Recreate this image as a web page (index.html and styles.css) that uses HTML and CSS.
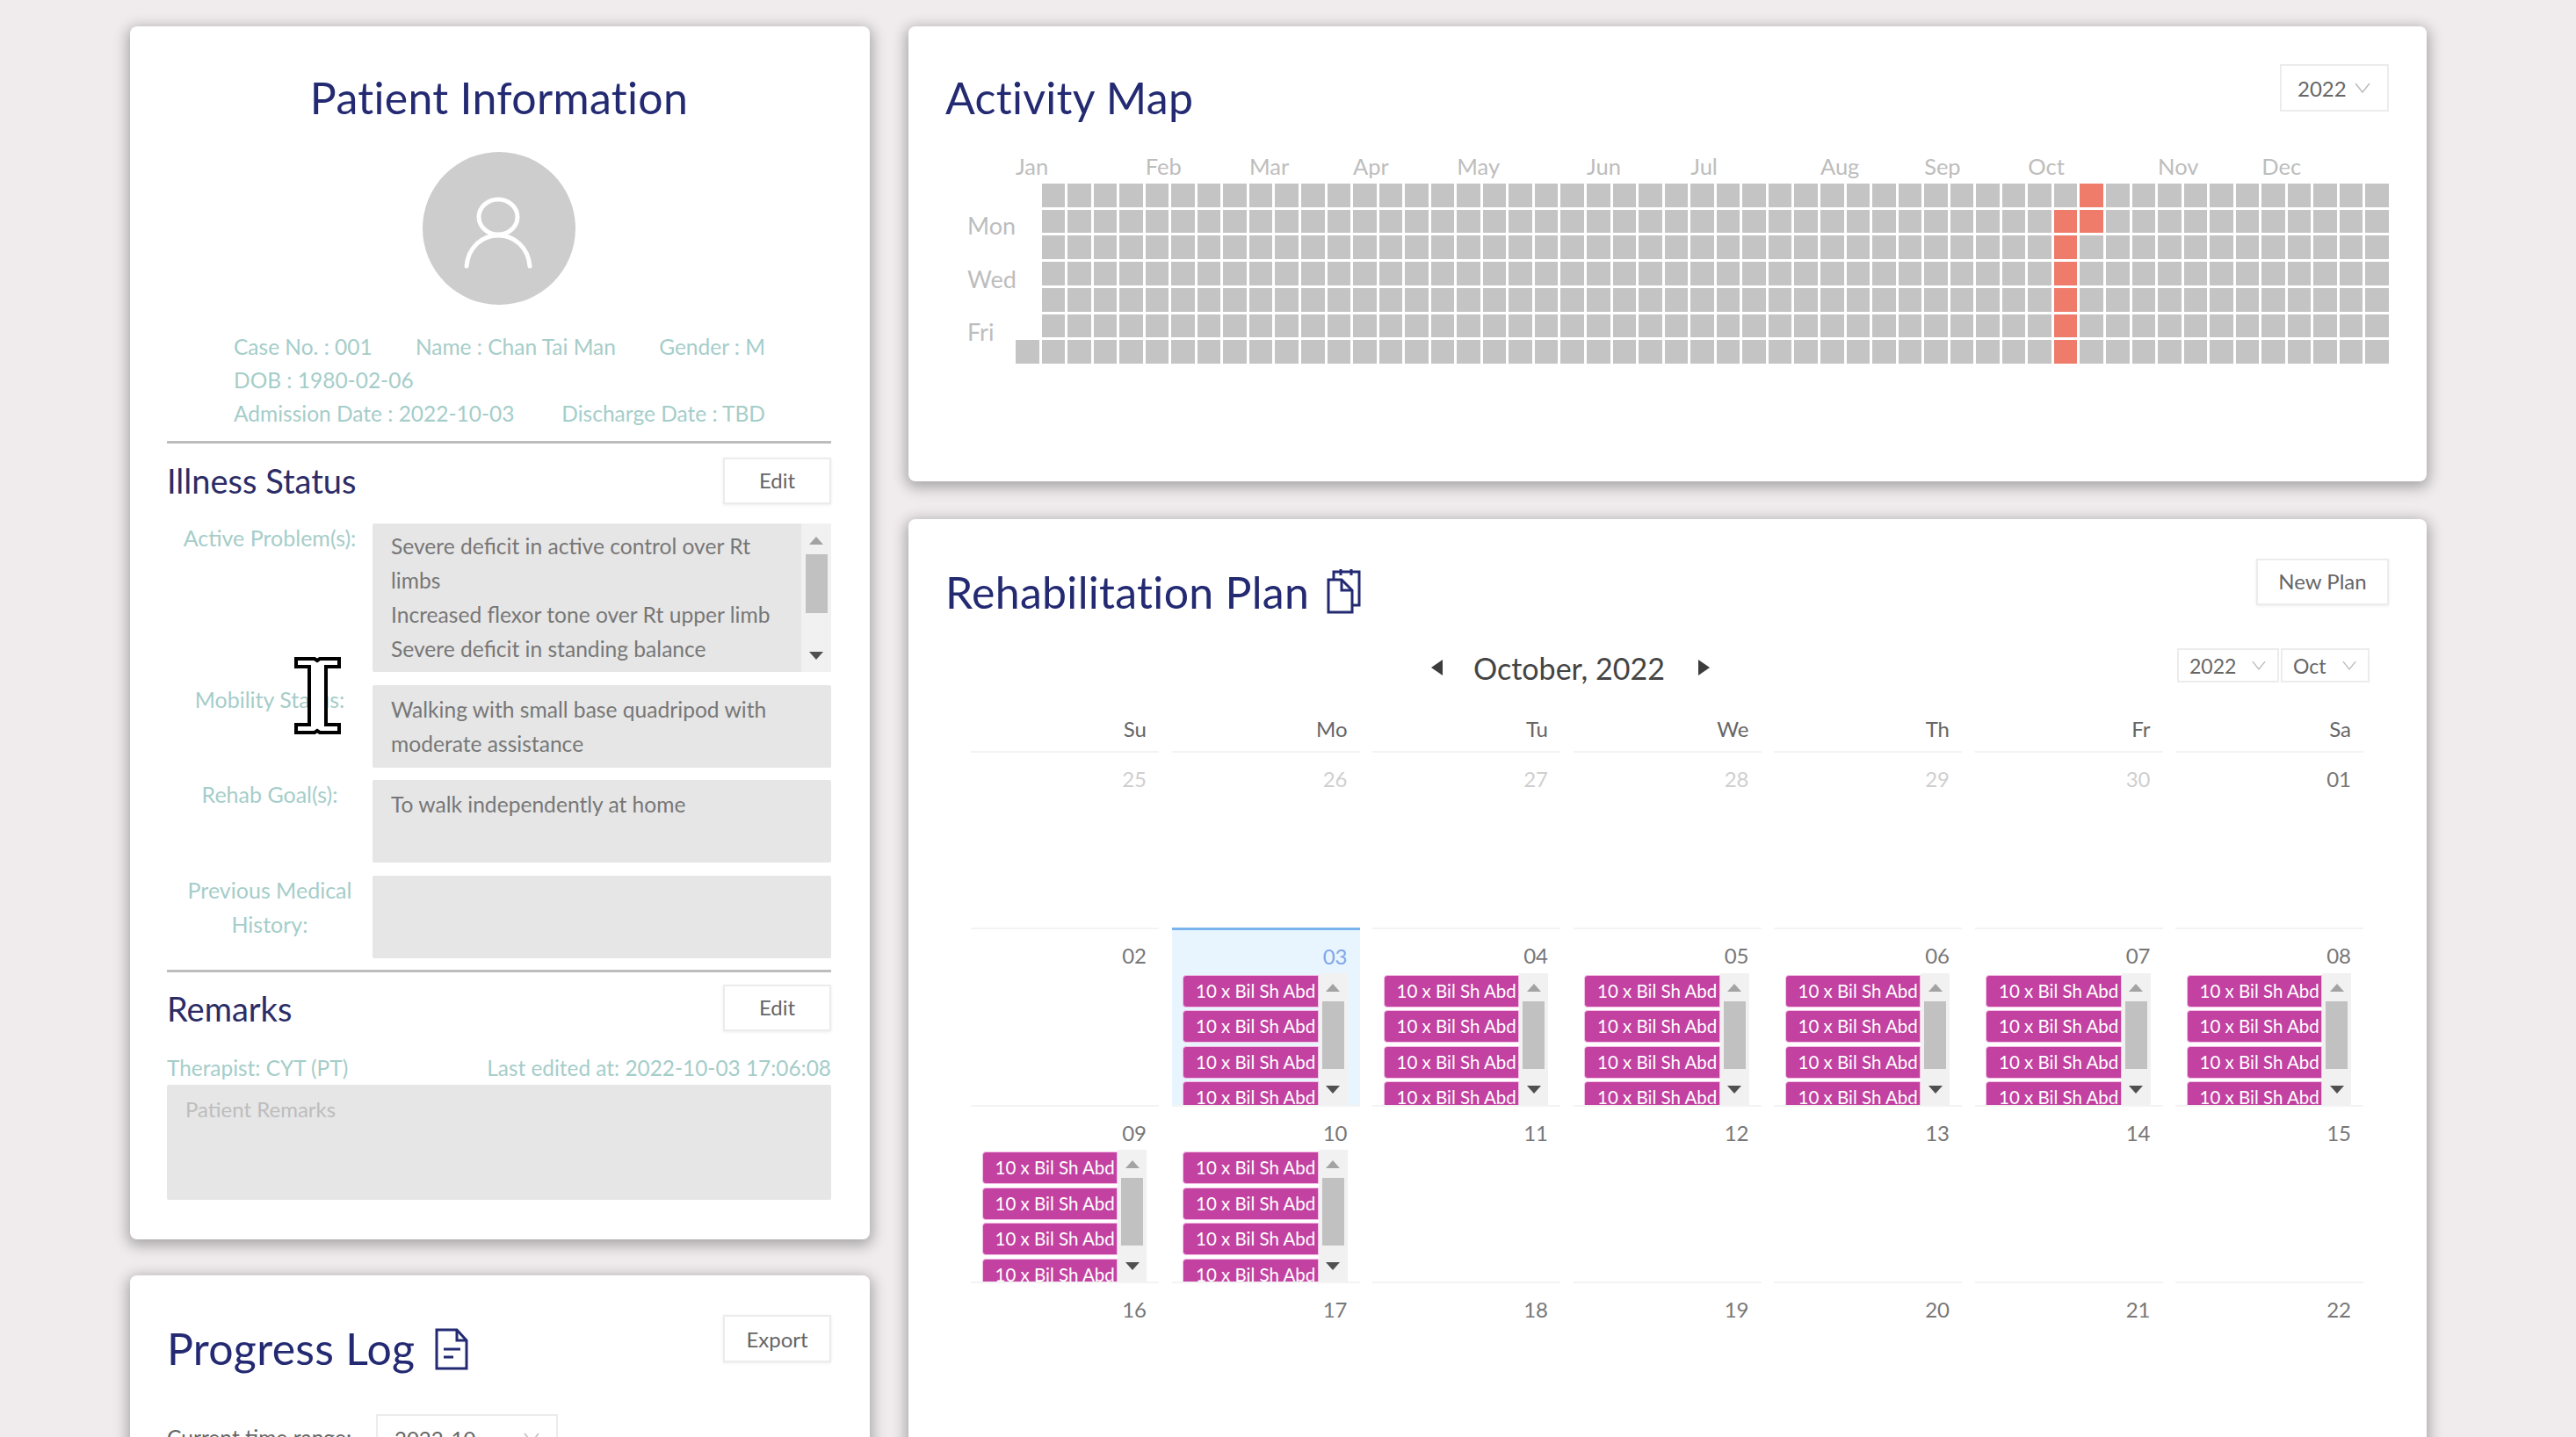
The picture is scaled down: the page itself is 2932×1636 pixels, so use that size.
FILE: index.html
```html
<!DOCTYPE html>
<html lang="en">
<head>
<meta charset="utf-8">
<title>Patient</title>
<link rel="stylesheet" href="styles.css">
</head>
<body>
<div class="page">
  <div class="col-left">
    <section class="card patient">
      <h1 class="title center">Patient Information</h1>
      <div class="avatar">
        <svg viewBox="0 0 174 174" width="174" height="174" fill="none" stroke="#fff" stroke-width="5" stroke-linecap="round"><ellipse cx="86" cy="74" rx="22" ry="20"/><path d="M50 130C52 108 68 95 86 95C104 95 120 108 122 130"/></svg>
      </div>
      <div class="info">
        <div class="info-row"><span>Case No. : 001</span><span>Name : Chan Tai Man</span><span>Gender : M</span></div>
        <div class="info-row"><span>DOB : 1980-02-06</span></div>
        <div class="info-row"><span>Admission Date : 2022-10-03</span><span>Discharge Date : TBD</span></div>
      </div>
      <hr class="rule">
      <div class="sec-head">
        <h2 class="sub">Illness Status</h2>
        <button class="btn">Edit</button>
      </div>
      <div class="fields">
        <label class="lbl">Active Problem(s):</label>
        <div class="box box-scroll">
          <div class="box-text">Severe deficit in active control over Rt limbs<br>Increased flexor tone over Rt upper limb<br>Severe deficit in standing balance</div>
          <div class="sb sb-box"><i class="up"></i><b class="thumb"></b><i class="down"></i></div>
        </div>
        <label class="lbl">Mobility Status:</label>
        <div class="box h94"><div class="box-text">Walking with small base quadripod with moderate assistance</div></div>
        <label class="lbl">Rehab Goal(s):</label>
        <div class="box h94"><div class="box-text">To walk independently at home</div></div>
        <label class="lbl">Previous Medical History:</label>
        <div class="box h94"></div>
      </div>
      <hr class="rule rule2">
      <div class="sec-head sec-head2">
        <h2 class="sub">Remarks</h2>
        <button class="btn">Edit</button>
      </div>
      <div class="meta"><span>Therapist: CYT (PT)</span><span>Last edited at: 2022-10-03 17:06:08</span></div>
      <div class="remarks">Patient Remarks</div>
    </section>
    <section class="card progress">
      <div class="head">
        <h1 class="title">Progress Log
          <svg class="ico-doc" viewBox="0 0 38 48" width="38" height="48" fill="none" stroke="#232a72" stroke-width="3"><path d="M2 2h23l11 12v32H2z"/><path d="M25 2v12h11"/><path d="M10 24h19M10 33h11"/></svg>
        </h1>
        <button class="btn btn-export">Export</button>
      </div>
      <div class="range"><span>Current time range:</span><div class="select select-range">2022-10<svg class="chev" viewBox="0 0 18 12" width="18" height="12" fill="none" stroke="#bbb" stroke-width="1.5"><path d="M1 1l8 10 8-10"/></svg></div></div>
    </section>
  </div>
  <div class="col-right">
    <section class="card activity">
      <div class="head">
        <h1 class="title">Activity Map</h1>
        <div class="select select-year">2022<svg class="chev" viewBox="0 0 18 12" width="18" height="12" fill="none" stroke="#bbb" stroke-width="1.5"><path d="M1 1l8 10 8-10"/></svg></div>
      </div>
      <div class="map">
        <div class="months">
          <span class="m0">Jan</span><span class="m1">Feb</span><span class="m2">Mar</span><span class="m3">Apr</span><span class="m4">May</span><span class="m5">Jun</span><span class="m6">Jul</span><span class="m7">Aug</span><span class="m8">Sep</span><span class="m9">Oct</span><span class="m10">Nov</span><span class="m11">Dec</span>
        </div>
        <div class="map-body">
          <div class="days"><span class="d1">Mon</span><span class="d3">Wed</span><span class="d5">Fri</span></div>
          <div class="heat">
            <i class="first"></i>
            <i></i><i></i><i></i><i></i><i></i><i></i><i></i>
            <i></i><i></i><i></i><i></i><i></i><i></i><i></i>
            <i></i><i></i><i></i><i></i><i></i><i></i><i></i>
            <i></i><i></i><i></i><i></i><i></i><i></i><i></i>
            <i></i><i></i><i></i><i></i><i></i><i></i><i></i>
            <i></i><i></i><i></i><i></i><i></i><i></i><i></i>
            <i></i><i></i><i></i><i></i><i></i><i></i><i></i>
            <i></i><i></i><i></i><i></i><i></i><i></i><i></i>
            <i></i><i></i><i></i><i></i><i></i><i></i><i></i>
            <i></i><i></i><i></i><i></i><i></i><i></i><i></i>
            <i></i><i></i><i></i><i></i><i></i><i></i><i></i>
            <i></i><i></i><i></i><i></i><i></i><i></i><i></i>
            <i></i><i></i><i></i><i></i><i></i><i></i><i></i>
            <i></i><i></i><i></i><i></i><i></i><i></i><i></i>
            <i></i><i></i><i></i><i></i><i></i><i></i><i></i>
            <i></i><i></i><i></i><i></i><i></i><i></i><i></i>
            <i></i><i></i><i></i><i></i><i></i><i></i><i></i>
            <i></i><i></i><i></i><i></i><i></i><i></i><i></i>
            <i></i><i></i><i></i><i></i><i></i><i></i><i></i>
            <i></i><i></i><i></i><i></i><i></i><i></i><i></i>
            <i></i><i></i><i></i><i></i><i></i><i></i><i></i>
            <i></i><i></i><i></i><i></i><i></i><i></i><i></i>
            <i></i><i></i><i></i><i></i><i></i><i></i><i></i>
            <i></i><i></i><i></i><i></i><i></i><i></i><i></i>
            <i></i><i></i><i></i><i></i><i></i><i></i><i></i>
            <i></i><i></i><i></i><i></i><i></i><i></i><i></i>
            <i></i><i></i><i></i><i></i><i></i><i></i><i></i>
            <i></i><i></i><i></i><i></i><i></i><i></i><i></i>
            <i></i><i></i><i></i><i></i><i></i><i></i><i></i>
            <i></i><i></i><i></i><i></i><i></i><i></i><i></i>
            <i></i><i></i><i></i><i></i><i></i><i></i><i></i>
            <i></i><i></i><i></i><i></i><i></i><i></i><i></i>
            <i></i><i></i><i></i><i></i><i></i><i></i><i></i>
            <i></i><i></i><i></i><i></i><i></i><i></i><i></i>
            <i></i><i></i><i></i><i></i><i></i><i></i><i></i>
            <i></i><i></i><i></i><i></i><i></i><i></i><i></i>
            <i></i><i></i><i></i><i></i><i></i><i></i><i></i>
            <i></i><i></i><i></i><i></i><i></i><i></i><i></i>
            <i></i><i></i><i></i><i></i><i></i><i></i><i></i>
            <i></i><i class="on"></i><i class="on"></i><i class="on"></i><i class="on"></i><i class="on"></i><i class="on"></i>
            <i class="on"></i><i class="on"></i><i></i><i></i><i></i><i></i><i></i>
            <i></i><i></i><i></i><i></i><i></i><i></i><i></i>
            <i></i><i></i><i></i><i></i><i></i><i></i><i></i>
            <i></i><i></i><i></i><i></i><i></i><i></i><i></i>
            <i></i><i></i><i></i><i></i><i></i><i></i><i></i>
            <i></i><i></i><i></i><i></i><i></i><i></i><i></i>
            <i></i><i></i><i></i><i></i><i></i><i></i><i></i>
            <i></i><i></i><i></i><i></i><i></i><i></i><i></i>
            <i></i><i></i><i></i><i></i><i></i><i></i><i></i>
            <i></i><i></i><i></i><i></i><i></i><i></i><i></i>
            <i></i><i></i><i></i><i></i><i></i><i></i><i></i>
            <i></i><i></i><i></i><i></i><i></i><i></i><i></i>
          </div>
        </div>
      </div>
    </section>
    <section class="card rehab">
      <div class="head">
        <h1 class="title">Rehabilitation Plan
          <svg class="ico-plan" viewBox="0 0 40 52" width="40" height="52" fill="none" stroke="#232a72" stroke-width="3"><path d="M8 13V4h29v38h-8"/><path d="M2 13h15l12 12v25H2z"/><path d="M17 13v12h12"/><path d="M16 1v7M28 1v7"/></svg>
        </h1>
        <button class="btn btn-new">New Plan</button>
      </div>
      <div class="cal-top">
        <div class="nav"><i class="tri-l"></i><span>October, 2022</span><i class="tri-r"></i></div>
        <div class="selects">
          <div class="select select-sm s-y">2022<svg class="chev" viewBox="0 0 18 12" width="16" height="11" fill="none" stroke="#bbb" stroke-width="1.5"><path d="M1 1l8 10 8-10"/></svg></div>
          <div class="select select-sm s-m">Oct<svg class="chev" viewBox="0 0 18 12" width="16" height="11" fill="none" stroke="#bbb" stroke-width="1.5"><path d="M1 1l8 10 8-10"/></svg></div>
        </div>
      </div>
      <div class="cal-head"><span>Su</span><span>Mo</span><span>Tu</span><span>We</span><span>Th</span><span>Fr</span><span>Sa</span></div>
      <div class="cal">
        <div class="day off"><div class="num">25</div></div>
        <div class="day off"><div class="num">26</div></div>
        <div class="day off"><div class="num">27</div></div>
        <div class="day off"><div class="num">28</div></div>
        <div class="day off"><div class="num">29</div></div>
        <div class="day off"><div class="num">30</div></div>
        <div class="day"><div class="num">01</div></div>

        <div class="day"><div class="num">02</div></div>
        <div class="day today"><div class="num">03</div><div class="events"><div class="list"><div class="ev">10 x Bil Sh Abd</div><div class="ev">10 x Bil Sh Abd</div><div class="ev">10 x Bil Sh Abd</div><div class="ev">10 x Bil Sh Abd</div></div><div class="sb"><i class="up"></i><b class="thumb"></b><i class="down"></i></div></div></div>
        <div class="day"><div class="num">04</div><div class="events"><div class="list"><div class="ev">10 x Bil Sh Abd</div><div class="ev">10 x Bil Sh Abd</div><div class="ev">10 x Bil Sh Abd</div><div class="ev">10 x Bil Sh Abd</div></div><div class="sb"><i class="up"></i><b class="thumb"></b><i class="down"></i></div></div></div>
        <div class="day"><div class="num">05</div><div class="events"><div class="list"><div class="ev">10 x Bil Sh Abd</div><div class="ev">10 x Bil Sh Abd</div><div class="ev">10 x Bil Sh Abd</div><div class="ev">10 x Bil Sh Abd</div></div><div class="sb"><i class="up"></i><b class="thumb"></b><i class="down"></i></div></div></div>
        <div class="day"><div class="num">06</div><div class="events"><div class="list"><div class="ev">10 x Bil Sh Abd</div><div class="ev">10 x Bil Sh Abd</div><div class="ev">10 x Bil Sh Abd</div><div class="ev">10 x Bil Sh Abd</div></div><div class="sb"><i class="up"></i><b class="thumb"></b><i class="down"></i></div></div></div>
        <div class="day"><div class="num">07</div><div class="events"><div class="list"><div class="ev">10 x Bil Sh Abd</div><div class="ev">10 x Bil Sh Abd</div><div class="ev">10 x Bil Sh Abd</div><div class="ev">10 x Bil Sh Abd</div></div><div class="sb"><i class="up"></i><b class="thumb"></b><i class="down"></i></div></div></div>
        <div class="day"><div class="num">08</div><div class="events"><div class="list"><div class="ev">10 x Bil Sh Abd</div><div class="ev">10 x Bil Sh Abd</div><div class="ev">10 x Bil Sh Abd</div><div class="ev">10 x Bil Sh Abd</div></div><div class="sb"><i class="up"></i><b class="thumb"></b><i class="down"></i></div></div></div>

        <div class="day"><div class="num">09</div><div class="events"><div class="list"><div class="ev">10 x Bil Sh Abd</div><div class="ev">10 x Bil Sh Abd</div><div class="ev">10 x Bil Sh Abd</div><div class="ev">10 x Bil Sh Abd</div></div><div class="sb"><i class="up"></i><b class="thumb"></b><i class="down"></i></div></div></div>
        <div class="day"><div class="num">10</div><div class="events"><div class="list"><div class="ev">10 x Bil Sh Abd</div><div class="ev">10 x Bil Sh Abd</div><div class="ev">10 x Bil Sh Abd</div><div class="ev">10 x Bil Sh Abd</div></div><div class="sb"><i class="up"></i><b class="thumb"></b><i class="down"></i></div></div></div>
        <div class="day"><div class="num">11</div></div>
        <div class="day"><div class="num">12</div></div>
        <div class="day"><div class="num">13</div></div>
        <div class="day"><div class="num">14</div></div>
        <div class="day"><div class="num">15</div></div>

        <div class="day last"><div class="num">16</div></div>
        <div class="day last"><div class="num">17</div></div>
        <div class="day last"><div class="num">18</div></div>
        <div class="day last"><div class="num">19</div></div>
        <div class="day last"><div class="num">20</div></div>
        <div class="day last"><div class="num">21</div></div>
        <div class="day last"><div class="num">22</div></div>
      </div>
    </section>
  </div>
  <svg class="cursor" viewBox="0 0 53 88" width="53" height="88" fill="#fff" stroke="#000" stroke-width="4"><path d="M2 2h21l3 2 3-2h22v9H36v66h15v9H29l-3-2-3 2H2v-9h15V11H2z"/></svg>
</div>
</body>
</html>
```
FILE: styles.css
```css
* { box-sizing: border-box; }
html, body { margin: 0; padding: 0; }
body { background: #f0ecee; font-family: "Lato", "Open Sans", sans-serif; color: #777; }
.page {
  position: relative;
  width: 2932px;
  height: 1636px;
  overflow: hidden;
  display: grid;
  grid-template-columns: 842px 1728px;
  column-gap: 44px;
  padding: 30px 0 0 148px;
  align-items: start;
}
.col-left, .col-right { display: flex; flex-direction: column; }
.col-left { gap: 41px; }
.col-right { gap: 43px; }
.card {
  background: #fff;
  border-radius: 8px;
  box-shadow: 0 4px 16px 3px rgba(0,0,0,.3);
}
.title {
  margin: 0;
  font-weight: 400;
  font-size: 50px;
  line-height: 56px;
  color: #232a72;
  letter-spacing: .3px;
  white-space: nowrap;
}
.title svg { vertical-align: -6px; margin-left: 8px; }
.title .ico-doc { margin-left: 10px; }
.title .ico-plan { margin-left: 7px; }
.center { text-align: center; }
.patient { height: 1381px; padding: 53px 44px 0 42px; }
.avatar {
  width: 174px; height: 174px; margin: 34px auto 0;
  border-radius: 50%; background: #cdcdcd;
}
.avatar svg { display: block; }
.info { margin-top: 29px; padding: 0 75px 0 76px; color: #a5cdc9; font-size: 24.5px; line-height: 38px; }
.info-row { display: flex; justify-content: space-between; }
.rule { margin: 12px 0 0; border: 0; height: 3px; background: #bdbdbd; }
.rule2 { margin-top: 13px; }
.sec-head { display: flex; justify-content: space-between; align-items: flex-start; margin-top: 16px; }
.sec-head2 { margin-top: 14px; }
.sec-head2 .sub { margin-top: 5px; }
.sub { margin: 4px 0 0; font-weight: 400; font-size: 38px; line-height: 44px; color: #2c2c66; }
.btn {
  font: inherit; font-size: 24px; color: #666;
  width: 123px; height: 53px;
  background: #fff; border: 2px solid #ececec; padding: 0 0 2px;
  box-shadow: 0 1px 3px rgba(0,0,0,.08);
}
.fields {
  display: grid;
  grid-template-columns: 234px 522px;
  row-gap: 14.5px;
  margin-top: 22px;
}
.lbl {
  color: #a5cdc9; font-size: 25px; line-height: 39px; text-align: center;
  padding: 0 17px 0 17px; margin-top: -3px;
}
.box { background: #e6e6e6; border-radius: 2px; color: #777; font-size: 24.6px; line-height: 39px; }
.h94 { height: 94px; }
.box-scroll { height: 169px; display: flex; justify-content: space-between; }
.box-text { padding: 8px 20px 0 21px; }
.box-scroll .box-text { padding: 6px 12px 0 21px; flex: 1; }
.sb {
  width: 33px; flex: none; background: #f1f1f1;
  display: flex; flex-direction: column; align-items: center;
}
.sb-box { width: 34px; }
.up { width: 0; height: 0; border: 8px solid transparent; border-top: 0; border-bottom: 9px solid #a3a3a3; margin: 12px 0 11px; }
.down { width: 0; height: 0; border: 8px solid transparent; border-bottom: 0; border-top: 9px solid #505050; margin-top: 19px; }
.thumb { display: block; width: 25px; height: 77px; background: #c1c1c1; }
.sb-box .up { margin: 15px 0 11px; }
.sb-box .thumb { height: 67px; }
.sb-box .down { margin-top: 44px; }
.meta {
  display: flex; justify-content: space-between;
  color: #a5cdc9; font-size: 24.4px; line-height: 34px; margin-top: 25px;
}
.remarks {
  margin-top: 2px; height: 131px; background: #e6e6e6; color: #bdbdbd;
  font-size: 24px; line-height: 34px; padding: 11px 21px;
  border-radius: 2px;
}
.progress { height: 400px; padding: 45px 44px 0 42px; }
.head { display: flex; justify-content: space-between; align-items: flex-start; }
.head .title { margin-top: 10px; }
.btn-export { height: 54px; padding: 0; }
.range { display: flex; align-items: flex-start; margin-top: 47px; font-size: 24.6px; color: #666; }
.range span { width: 238px; flex: none; padding-top: 12px; line-height: 30px; }
.select {
  display: flex; align-items: center; justify-content: space-between;
  background: #fff; border: 2px solid #ececec; color: #666; font-size: 24px;
}
.select-range { width: 207px; height: 54px; padding: 0 19px 0 19px; }
.activity { height: 518px; padding: 43px 43px 0 42px; }
.select-year { width: 124px; height: 54px; padding: 0 19px 0 18px; }
.map { margin: 35px 0 0 28px; }
.months, .heat { display: grid; grid-template-columns: repeat(53, minmax(0, 1fr)); column-gap: 3px; }
.months { margin-left: 52px; height: 30px; color: #bdbdbd; font-size: 25.5px; line-height: 30px; }
.months span { white-space: nowrap; grid-row: 1; }
.m0 { grid-column: 1; } .m1 { grid-column: 6; } .m2 { grid-column: 10; } .m3 { grid-column: 14; }
.m4 { grid-column: 18; } .m5 { grid-column: 23; } .m6 { grid-column: 27; } .m7 { grid-column: 32; }
.m8 { grid-column: 36; } .m9 { grid-column: 40; } .m10 { grid-column: 45; } .m11 { grid-column: 49; }
.map-body { display: flex; margin-top: 5px; }
.days { width: 52px; flex: none; margin-left: -3px; height: 205px; display: grid; grid-template-rows: repeat(7, 1fr); row-gap: 3px; color: #bdbdbd; font-size: 27px; }
.days span { line-height: 26px; }
.d1 { grid-row: 2; padding-top: 11px; } .d3 { grid-row: 4; padding-top: 9px; } .d5 { grid-row: 6; padding-top: 7px; }
.heat { flex: 1; margin-left: 3px; height: 205px; grid-template-rows: repeat(7, 1fr); row-gap: 3px; grid-auto-flow: column; }
.heat i { background: #c4c4c4; display: block; }
.heat i.first { grid-row: 7; }
.heat i.on { background: #ef7c6b; }
.rehab { height: 1100px; padding: 45px 43px 0 42px; }
.btn-new { width: 151px; height: 53px; }
.cal-top {
  display: flex; justify-content: space-between; align-items: center;
  height: 39px; margin-top: 36px; padding: 0 22px 0 553px;
}
.nav { display: flex; align-items: center; color: #444; font-size: 34px; padding-top: 5px; }
.nav span { margin: 0 38px 0 35px; }
.tri-l, .tri-r { width: 0; height: 0; border: 9px solid transparent; }
.tri-l { border-left: 0; border-right: 13px solid #3c3c3c; }
.tri-r { border-right: 0; border-left: 13px solid #3c3c3c; }
.selects { display: flex; gap: 2px; }
.select-sm { height: 39px; padding: 0 13px; font-size: 23px; }
.s-y { width: 116px; padding-left: 12px; }
.s-m { width: 101px; padding-left: 12px; }
.cal-head, .cal { display: grid; grid-template-columns: repeat(7, 214px); column-gap: 14.5px; margin: 0 0 0 29px; }
.cal-head { height: 77.5px; font-size: 24px; color: #666; text-align: right; }
.cal-head span { padding: 35px 14px 0 0; line-height: 36px; height: 77.5px; }
.cal { grid-auto-rows: 201.5px; }
.day { border-top: 2px solid #f3f3f3; display: flex; flex-direction: column; overflow: hidden; }
.off .num { color: #cfcfcf; }
.num { height: 49.5px; padding: 13px 14px 0 0; text-align: right; font-size: 24px; line-height: 34px; color: #777; flex: none; }
.today { background: #e8f5ff; border-top: 3px solid #7ab4ee; }
.today .num { color: #7fa6ea; height: 48.5px; }
.events { display: flex; height: 151px; margin: 0 14px 0 12.5px; flex: none; }
.list { flex: 1; min-width: 0; overflow: hidden; padding-top: 2px; }
.ev {
  height: 37px; margin-bottom: 3.5px; padding-left: 14px;
  background: #c241a1; border: 1px solid #f4bfe6;
  border-radius: 4px 0 0 4px;
  color: #fff; font-size: 20.5px; line-height: 35px; white-space: nowrap; overflow: hidden;
}
.cursor { position: absolute; left: 335px; top: 748px; }
```
